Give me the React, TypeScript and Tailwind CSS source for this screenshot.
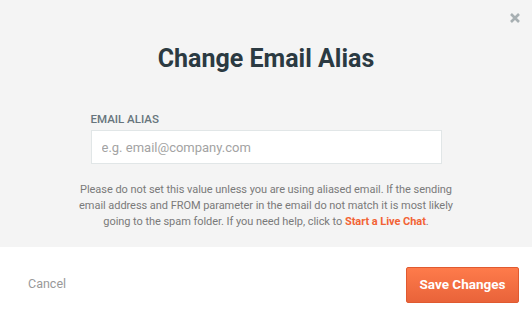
export default function App() {
  return (
    <div className="w-[532px] h-[318px] bg-white font-['Roboto',sans-serif] flex flex-col">
      <div className="relative h-[247px] bg-[#f4f4f4] flex flex-col items-center pt-[43px]">
        <button className="absolute right-[12px] top-[13px] text-[#a7afb2]">
          <svg width="10" height="10" viewBox="0 0 10 10" fill="none" stroke="currentColor" strokeWidth="2.6">
            <path d="M1 1 L9 9 M9 1 L1 9" />
          </svg>
        </button>

        <h2 className="text-[25px] leading-[32px] font-bold text-[#2b3a42]">Change Email Alias</h2>

        <div className="w-[351px] mt-[37px]">
          <label className="block text-[11.5px] leading-[14px] font-medium text-[#67757c]">
            EMAIL ALIAS
          </label>
          <input
            className="mt-[4px] w-full h-[34px] bg-white border border-[#e1e6e7] px-[10px] text-[13px] text-[#333] placeholder:text-[#a3a3a3] outline-none"
            placeholder="e.g. email@company.com"
          />
        </div>

        <p className="w-[376px] mt-[18px] text-center text-[11px] leading-[16px] tracking-[-0.05px] text-[#7a7a7a]">
          Please do not set this value unless you are using aliased email. If the sending
          email address and FROM parameter in the email do not match it is most likely
          going to the spam folder. If you need help, click to{" "}
          <a className="font-bold text-[#f26335]">Start a Live Chat</a>.
        </p>
      </div>

      <div className="flex-1 flex items-center justify-between pl-[28px] pr-[13px] pt-[4px]">
        <button className="text-[12.5px] text-[#999]">Cancel</button>
        <button className="w-[113px] h-[36px] rounded-[2px] border border-[#e05a30] bg-gradient-to-b from-[#fe7b4b] to-[#e9633a] text-white text-[13.5px] font-bold">
          Save Changes
        </button>
      </div>
    </div>
  )
}
